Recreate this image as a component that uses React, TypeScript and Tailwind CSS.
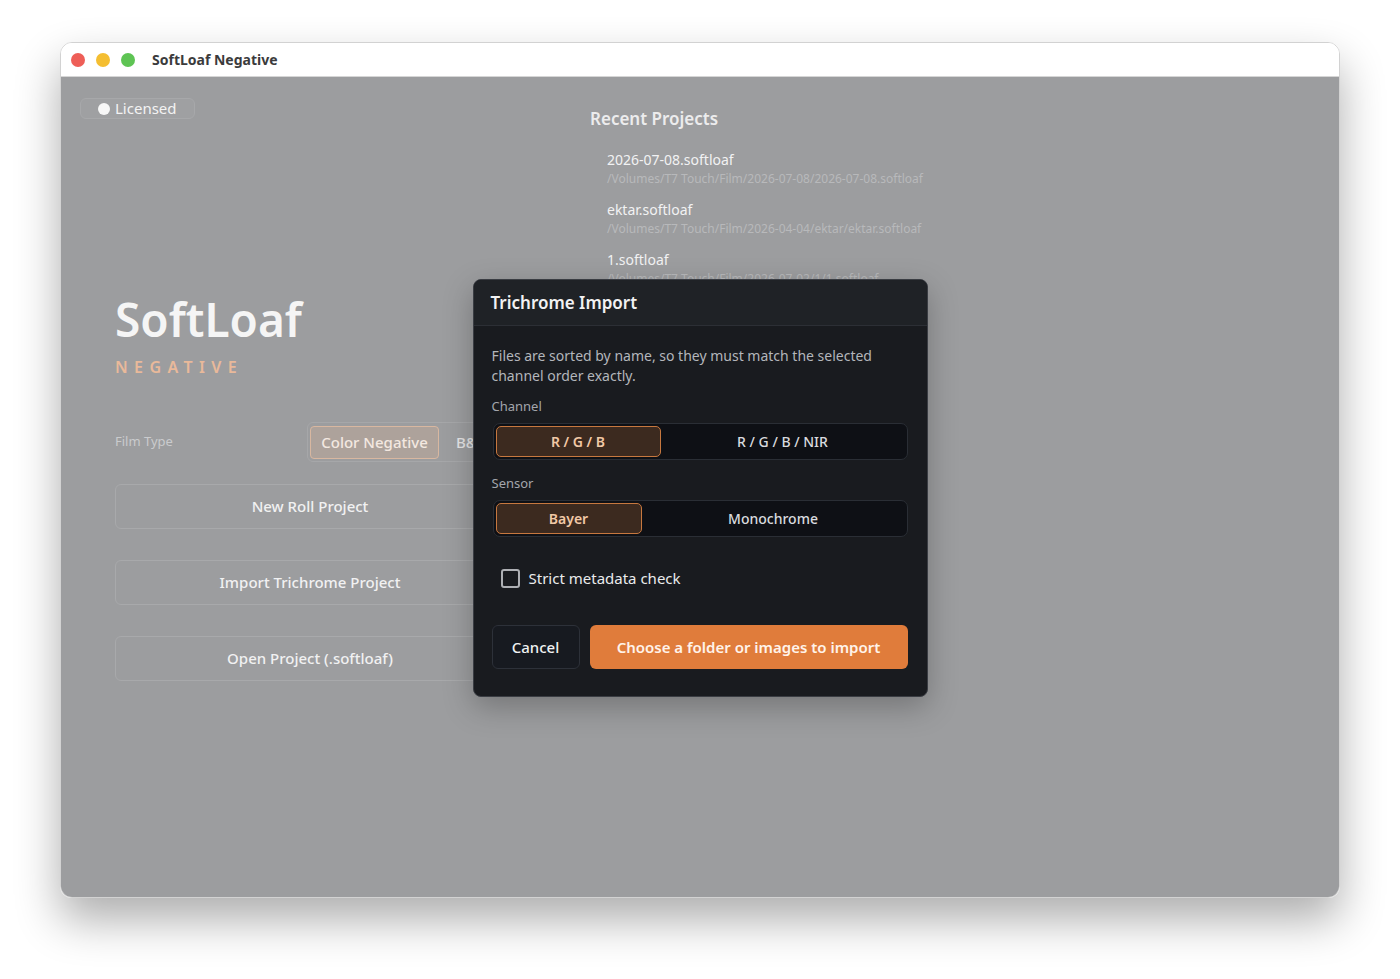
import React from 'react';

const recent = [
  { name: '2026-07-08.softloaf', path: '/Volumes/T7 Touch/Film/2026-07-08/2026-07-08.softloaf' },
  { name: 'ektar.softloaf', path: '/Volumes/T7 Touch/Film/2026-04-04/ektar/ektar.softloaf' },
  { name: '1.softloaf', path: '/Volumes/T7 Touch/Film/2026-07-02/1/1.softloaf' },
];

function Segmented({ options, selectedWidth }: { options: string[]; selectedWidth: string }) {
  return (
    <div className="flex h-[37px] rounded-[7px] border border-[#2a2e35] bg-[#0e1015] p-[2px]">
      <div
        className={`${selectedWidth} flex items-center justify-center rounded-[5px] border-[1.5px] border-[#c7783f] bg-[#3c2a1f] text-[14px] font-semibold text-[#f1c8a6]`}
      >
        {options[0]}
      </div>
      <div className="flex flex-1 items-center justify-center text-[14px] font-medium text-[#d9dbdf]">
        {options[1]}
      </div>
    </div>
  );
}

function TrichromeDialog() {
  return (
    <div className="w-[455px] overflow-hidden rounded-[8px] border border-[#3a3d43] bg-[#191b1f] shadow-[0_10px_30px_rgba(0,0,0,0.25)]">
      {/* Header */}
      <div className="flex h-[46px] items-center border-b border-[#2c2f35] bg-[#1f2226] px-[17px] pt-px">
        <h2 className="text-[17px] font-semibold text-[#f2f2f3]">Trichrome Import</h2>
      </div>

      {/* Body */}
      <div className="pl-[18px] pr-[19px] pt-[20px] pb-[27px]">
        <p className="text-[14px] leading-[20px] text-[#b3b6bb]">
          Files are sorted by name, so they must match the selected channel order exactly.
        </p>

        <div className="mt-[11px] text-[13px] leading-[18px] text-[#a3a6ac]">Channel</div>
        <div className="mt-[8px] pl-px">
          <Segmented options={['R / G / B', 'R / G / B / NIR']} selectedWidth="w-[165px]" />
        </div>

        <div className="mt-[14px] text-[13px] leading-[18px] text-[#a3a6ac]">Sensor</div>
        <div className="mt-[8px] pl-px">
          <Segmented options={['Bayer', 'Monochrome']} selectedWidth="w-[146px]" />
        </div>

        <label className="mt-[31px] ml-[9px] flex h-[20px] items-center gap-[9px]">
          <span className="h-[19px] w-[19px] rounded-[3px] border-2 border-[#aeb0b4]" />
          <span className="text-[15px] text-[#eaebec]">Strict metadata check</span>
        </label>

        <div className="mt-[37px] flex gap-[10px]">
          <button className="h-[44px] w-[88px] rounded-[6px] border border-[#2d3139] bg-[#171a20] text-[15px] font-medium text-[#f0f1f2]">
            Cancel
          </button>
          <button className="h-[44px] flex-1 rounded-[6px] bg-[#e07c3b] text-[15px] font-semibold text-[#fff3ea]">
            Choose a folder or images to import
          </button>
        </div>
      </div>
    </div>
  );
}

export default function App() {
  return (
    <div
      className="h-[979px] w-[1400px] bg-white pl-[60px] pt-[42px]"
      style={{ fontFamily: '"Noto Sans", "Open Sans", sans-serif' }}
    >
      <div className="flex h-[856px] w-[1280px] flex-col overflow-hidden rounded-[12px] border border-[#d2d2d2] shadow-[0_22px_45px_rgba(0,0,0,0.32)]">
        {/* Title bar */}
        <div className="flex h-[34px] shrink-0 items-center border-b border-[#d6d6d6] bg-white pl-[10px]">
          <div className="flex gap-[11px]">
            <span className="h-[14px] w-[14px] rounded-full bg-[#ee5e57]" />
            <span className="h-[14px] w-[14px] rounded-full bg-[#f4be31]" />
            <span className="h-[14px] w-[14px] rounded-full bg-[#5ec454]" />
          </div>
          <span className="ml-[17px] text-[14px] font-bold text-[#3b3b3c]">SoftLoaf Negative</span>
        </div>

        {/* Content (dimmed behind the dialog) */}
        <div className="relative flex-1 bg-[#9c9d9f]">
          <div className="absolute left-[19px] top-[21px] flex h-[21px] items-center gap-[5px] rounded-[6px] border border-[#a7a8aa] bg-[#9fa0a2] pl-[17px] pr-[17px]">
            <span className="h-[12px] w-[12px] rounded-full bg-[#f7f7f7]" />
            <span className="text-[15px] leading-none text-[#f3f3f3]">Licensed</span>
          </div>

          <div className="flex pl-[54px]">
            {/* Left column */}
            <div className="w-[390px] pt-[219px]">
              <h1 className="text-[46px] font-semibold leading-none text-[#f5f5f5]">SoftLoaf</h1>
              <div className="mt-[17px] text-[16px] font-semibold leading-none tracking-[0.4em] text-[#e9b99a]">
                NEGATIVE
              </div>

              <div className="mt-[47px] flex h-[40px] items-center">
                <span className="w-[192px] text-[13px] text-[#cacbcd]">Film Type</span>
                <div className="flex h-[40px] flex-1 items-center gap-[17px] rounded-[6px] border border-[#a6a7a9] px-[2px]">
                  <div className="flex h-[33px] w-[129px] items-center justify-center rounded-[4px] border border-[#d8b7a0] bg-[#ada29b] text-[15px] font-medium text-[#f3e8e0]">
                    Color Negative
                  </div>
                  <span className="text-[15px] font-medium text-[#e4e4e5]">B&amp;W</span>
                </div>
              </div>

              <div className="mt-[22px] flex flex-col gap-[31px]">
                {['New Roll Project', 'Import Trichrome Project', 'Open Project (.softloaf)'].map((label) => (
                  <button
                    key={label}
                    className="h-[45px] w-full rounded-[6px] border border-[#a8a9ab] text-[15px] font-medium text-[#f1f1f2]"
                  >
                    {label}
                  </button>
                ))}
              </div>
            </div>

            {/* Right column */}
            <div className="ml-[85px] pt-[30px]">
              <h3 className="text-[17px] font-semibold leading-[24px] text-[#ececed]">Recent Projects</h3>
              <div className="mt-[19px] flex flex-col gap-[12px] pl-[17px]">
                {recent.map((r) => (
                  <div key={r.name}>
                    <div className="text-[14px] leading-[20px] text-[#f2f2f3]">{r.name}</div>
                    <div className="text-[12px] leading-[18px] text-[#b8b9bb]">{r.path}</div>
                  </div>
                ))}
              </div>
            </div>
          </div>

          {/* Modal */}
          <div className="absolute inset-0 flex items-center justify-center pt-[2px]">
            <TrichromeDialog />
          </div>
        </div>
      </div>
    </div>
  );
}
